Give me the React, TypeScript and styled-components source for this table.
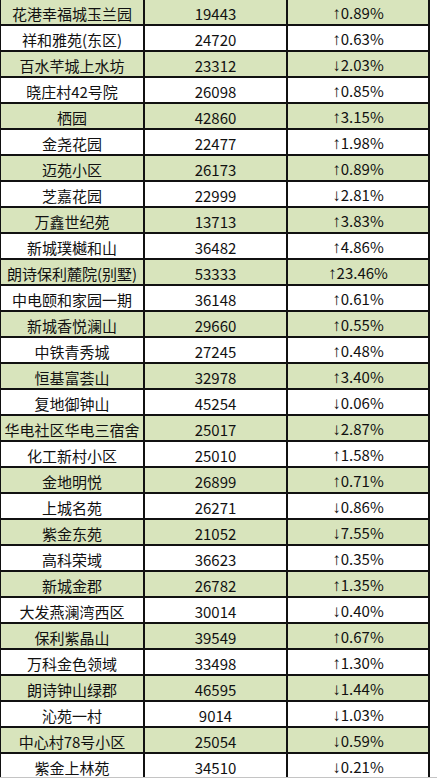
import React from "react";
import styled, { createGlobalStyle } from "styled-components";

const Global = createGlobalStyle`
  html, body { margin: 0; padding: 0; background: #ffffff; }
  body { font-family: "Noto Sans CJK SC", "Noto Sans", sans-serif; }
`;

type Row = [string, string, string];

const rows: Row[] = [
  ["花港幸福城玉兰园", "19443", "↑0.89%"],
  ["祥和雅苑(东区)", "24720", "↑0.63%"],
  ["百水芊城上水坊", "23312", "↓2.03%"],
  ["晓庄村42号院", "26098", "↑0.85%"],
  ["栖园", "42860", "↑3.15%"],
  ["金尧花园", "22477", "↑1.98%"],
  ["迈苑小区", "26173", "↑0.89%"],
  ["芝嘉花园", "22999", "↓2.81%"],
  ["万鑫世纪苑", "13713", "↑3.83%"],
  ["新城璞樾和山", "36482", "↑4.86%"],
  ["朗诗保利麓院(别墅)", "53333", "↑23.46%"],
  ["中电颐和家园一期", "36148", "↑0.61%"],
  ["新城香悦澜山", "29660", "↑0.55%"],
  ["中铁青秀城", "27245", "↑0.48%"],
  ["恒基富荟山", "32978", "↑3.40%"],
  ["复地御钟山", "45254", "↓0.06%"],
  ["华电社区华电三宿舍", "25017", "↓2.87%"],
  ["化工新村小区", "25010", "↑1.58%"],
  ["金地明悦", "26899", "↑0.71%"],
  ["上城名苑", "26271", "↓0.86%"],
  ["紫金东苑", "21052", "↓7.55%"],
  ["高科荣域", "36623", "↑0.35%"],
  ["新城金郡", "26782", "↑1.35%"],
  ["大发燕澜湾西区", "30014", "↓0.40%"],
  ["保利紫晶山", "39549", "↑0.67%"],
  ["万科金色领域", "33498", "↑1.30%"],
  ["朗诗钟山绿郡", "46595", "↓1.44%"],
  ["沁苑一村", "9014", "↓1.03%"],
  ["中心村78号小区", "25054", "↓0.59%"],
  ["紫金上林苑", "34510", "↓0.21%"],
];

const Page = styled.div`
  height: 778px;
  width: 437px;
  display: flex;
  flex-direction: column;
  overflow: hidden;
`;

const Viewport = styled.div`
  flex: 1;
  overflow: hidden;
`;

const Table = styled.div`
  width: 435px;
  border-left: 1px solid #111;
  display: grid;
  grid-template-columns: 144px 143px 142px;
`;

const Cell = styled.div<{ $green: boolean }>`
  height: 24px;
  box-sizing: content-box;
  border-right: 2px solid #111;
  border-bottom: 2px solid #111;
  background: ${(p) => (p.$green ? "#d8e4bc" : "#ffffff")};
  color: #111;
  font-size: 15px;
  line-height: 18px;
  display: flex;
  align-items: flex-end;
  justify-content: center;
  white-space: nowrap;
  overflow: hidden;
`;

const Text = styled.span`
  display: block;
  padding-bottom: 1px;
`;

const Arrow = styled.span`
  font-family: "Liberation Sans", sans-serif;
  font-size: 17px;
  line-height: 18px;
`;

const BottomEdge = styled.div`
  height: 1px;
  background: #c4c4c4;
  flex: none;
`;

function Change({ value }: { value: string }) {
  return (
    <Text>
      <Arrow>{value[0]}</Arrow>
      {value.slice(1)}
    </Text>
  );
}

export default function App() {
  return (
    <>
      <Global />
      <Page>
        <Viewport>
          <Table>
            {rows.map(([name, price, change], i) => {
              const green = i % 2 === 0;
              return (
                <React.Fragment key={name}>
                  <Cell $green={green}>
                    <Text>{name}</Text>
                  </Cell>
                  <Cell $green={green}>
                    <Text>{price}</Text>
                  </Cell>
                  <Cell $green={green}>
                    <Change value={change} />
                  </Cell>
                </React.Fragment>
              );
            })}
          </Table>
        </Viewport>
        <BottomEdge />
      </Page>
    </>
  );
}
